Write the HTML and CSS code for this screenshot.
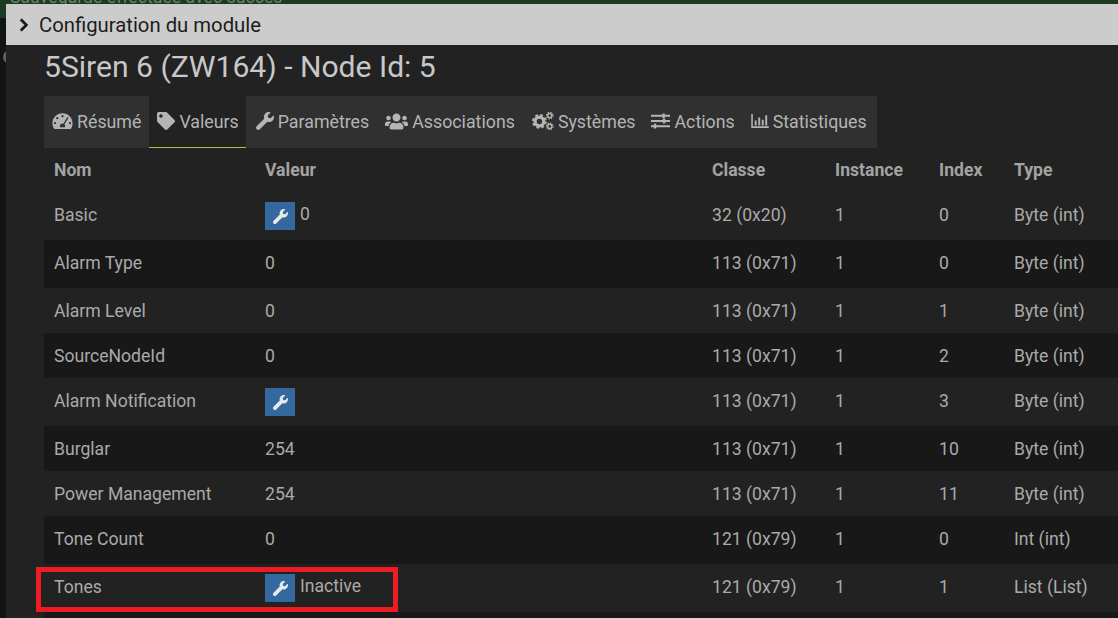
FILE: index.html
```html
<!DOCTYPE html>
<html lang="fr">
<head>
<meta charset="utf-8">
<title>Configuration du module</title>
<link rel="stylesheet" href="styles.css">
</head>
<body>
<div class="alert"><span class="alert-text">Sauvegarde effectuée avec succès</span></div>
<div class="backdrop-dot"></div>
<section class="modal">
  <header class="modal-head">
    <svg class="chev" viewBox="0 0 320 512"><path d="M285.476 272.971L91.132 467.314c-9.373 9.373-24.569 9.373-33.941 0l-22.667-22.667c-9.357-9.357-9.375-24.522-.04-33.901L188.505 256 34.484 101.255c-9.335-9.379-9.317-24.544.04-33.901l22.667-22.667c9.373-9.373 24.569-9.373 33.941 0L285.475 239.03c9.373 9.372 9.373 24.568.001 33.941z"/></svg>
    <span>Configuration du module</span>
  </header>
  <div class="modal-body">
    <h1 class="title">5Siren 6 (ZW164) - Node Id: 5</h1>
    <nav class="tabs">
      <a class="tab">
        <svg class="ico" viewBox="0 0 24 20"><path fill-rule="evenodd" d="M12 1C5.400 1 .5 6 .5 12.500c0 2.200.6 4.300 1.600 6 .2.300.5.500.9.500h18c.4 0 .7-.2.900-.5 1-1.700 1.600-3.800 1.600-6C23.500 6 18.600 1 12 1zM12 3.200a1.300 1.300 0 1 1 0 2.600 1.300 1.300 0 0 1 0-2.600zM6 5.500a1.300 1.300 0 1 1 0 2.600 1.300 1.300 0 0 1 0-2.600zM3.500 11a1.300 1.300 0 1 1 0 2.600 1.300 1.300 0 0 1 0-2.600zM20.500 11a1.300 1.300 0 1 1 0 2.600 1.300 1.300 0 0 1 0-2.600zM17.600 5.300l1.300.9-4.700 7.600c.5.500.8 1.100.8 1.900 0 .6-.2 1.100-.4 1.500H9.400c-.3-.4-.4-.9-.4-1.500 0-1.500 1.300-2.800 3-2.800l1 .1z"/></svg>
        <span>Résumé</span>
      </a>
      <a class="tab tab-active">
        <svg class="ico ico-tag" viewBox="0 0 512 512"><path d="M0 252.118V48C0 21.490 21.490 0 48 0h204.118a48 48 0 0 1 33.941 14.059l211.882 211.882c18.745 18.745 18.745 49.137 0 67.882L293.823 497.941c-18.745 18.745-49.137 18.745-67.882 0L14.059 286.059A48 48 0 0 1 0 252.118zM112 64c-26.510 0-48 21.490-48 48s21.490 48 48 48 48-21.490 48-48-21.490-48-48-48z"/></svg>
        <span>Valeurs</span>
      </a>
      <a class="tab tab-wrench">
        <svg class="ico ico-wrench" viewBox="0 0 512 512"><path d="M507.730 109.100c-2.240-9.030-13.540-12.090-20.120-5.510l-74.360 74.360-67.880-11.310-11.310-67.880 74.360-74.360c6.620-6.620 3.430-17.900-5.660-20.160-47.380-11.740-99.550.91-136.580 37.930-39.640 39.640-50.550 97.100-34.050 147.200L18.740 402.760c-24.990 24.990-24.990 65.510 0 90.500 24.990 24.990 65.510 24.990 90.500 0l213.210-213.210c50.120 16.710 107.470 5.680 147.370-34.220 37.070-37.070 49.700-89.320 37.910-136.730z"/></svg>
        <span>Paramètres</span>
      </a>
      <a class="tab">
        <svg class="ico ico-users" viewBox="0 0 640 512"><path d="M96 224c35.300 0 64-28.700 64-64s-28.700-64-64-64-64 28.700-64 64 28.700 64 64 64zm448 0c35.300 0 64-28.700 64-64s-28.700-64-64-64-64 28.700-64 64 28.700 64 64 64zm32 32h-64c-17.600 0-33.500 7.100-45.100 18.600 40.300 22.100 68.900 62 75.100 109.400h66c17.700 0 32-14.300 32-32v-32c0-35.300-28.700-64-64-64zm-256 0c61.900 0 112-50.100 112-112S381.900 32 320 32 208 82.100 208 144s50.100 112 112 112zm76.800 32h-8.300c-20.800 10-43.900 16-68.500 16s-47.600-6-68.500-16h-8.300C179.600 288 128 339.600 128 403.200V432c0 26.500 21.500 48 48 48h288c26.500 0 48-21.500 48-48v-28.800c0-63.600-51.600-115.200-115.200-115.200zm-223.700-13.400C161.500 263.100 145.600 256 128 256H64c-35.300 0-64 28.700-64 64v32c0 17.700 14.300 32 32 32h65.900c6.300-47.400 34.900-87.300 75.200-109.400z"/></svg>
        <span>Associations</span>
      </a>
      <a class="tab tab-cogs">
        <svg class="ico ico-cogs" viewBox="0 0 24 20">
          <circle cx="8" cy="10.500" r="4.800" fill="none" stroke="currentColor" stroke-width="3.600"/>
          <circle cx="8" cy="10.500" r="7" fill="none" stroke="currentColor" stroke-width="2.400" stroke-dasharray="3 2.500"/>
          <circle cx="19.500" cy="4" r="2.300" fill="none" stroke="currentColor" stroke-width="1.600"/>
          <circle cx="19.500" cy="4" r="3.700" fill="none" stroke="currentColor" stroke-width="1.300" stroke-dasharray="1.500 1.400"/>
          <circle cx="19.500" cy="16" r="2.300" fill="none" stroke="currentColor" stroke-width="1.600"/>
          <circle cx="19.500" cy="16" r="3.700" fill="none" stroke="currentColor" stroke-width="1.300" stroke-dasharray="1.500 1.400"/>
        </svg>
        <span>Systèmes</span>
      </a>
      <a class="tab">
        <svg class="ico ico-sliders" viewBox="0 0 20 16"><path d="M0 1.500h20v2H0zM0 7h20v2H0zM0 12.500h20v2H0zM12 0h2.500v5H12zM12.500 5.500H15v5h-2.500zM3 11h2.500v5H3z"/></svg>
        <span>Actions</span>
      </a>
      <a class="tab">
        <svg class="ico ico-chart" viewBox="0 0 20 16"><path d="M0 0h1.800v14H20v2H0zM4 7.500h2.200V13H4zM8 4h2.200v9H8zM12 6.500h2.200V13H12zM16 1.500h2.200V13H16z"/></svg>
        <span>Statistiques</span>
      </a>
    </nav>
    <table class="values">
      <colgroup>
        <col class="c-nom"><col class="c-val"><col class="c-cla"><col class="c-ins"><col class="c-idx"><col class="c-typ">
      </colgroup>
      <thead>
        <tr><th>Nom</th><th>Valeur</th><th>Classe</th><th>Instance</th><th>Index</th><th>Type</th></tr>
      </thead>
      <tbody>
        <tr class="tall"><td>Basic</td><td class="with-btn"><button class="btn"><svg viewBox="0 0 512 512"><path d="M507.730 109.100c-2.240-9.030-13.540-12.090-20.120-5.510l-74.360 74.360-67.880-11.310-11.310-67.880 74.360-74.360c6.620-6.620 3.430-17.900-5.660-20.160-47.380-11.740-99.550.91-136.580 37.930-39.640 39.640-50.550 97.100-34.050 147.200L18.740 402.760c-24.990 24.990-24.990 65.510 0 90.500 24.990 24.990 65.510 24.990 90.500 0l213.210-213.210c50.120 16.710 107.470 5.680 147.370-34.220 37.070-37.070 49.700-89.320 37.910-136.730z"/></svg></button><span>0</span></td><td>32 (0x20)</td><td>1</td><td>0</td><td>Byte (int)</td></tr>
        <tr class="tall"><td>Alarm Type</td><td>0</td><td>113 (0x71)</td><td>1</td><td>0</td><td>Byte (int)</td></tr>
        <tr><td>Alarm Level</td><td>0</td><td>113 (0x71)</td><td>1</td><td>1</td><td>Byte (int)</td></tr>
        <tr><td>SourceNodeId</td><td>0</td><td>113 (0x71)</td><td>1</td><td>2</td><td>Byte (int)</td></tr>
        <tr class="tall"><td>Alarm Notification</td><td class="with-btn"><button class="btn"><svg viewBox="0 0 512 512"><path d="M507.730 109.100c-2.240-9.030-13.540-12.090-20.120-5.510l-74.360 74.360-67.880-11.310-11.310-67.880 74.360-74.360c6.620-6.620 3.430-17.900-5.660-20.160-47.380-11.740-99.550.91-136.580 37.930-39.640 39.640-50.550 97.100-34.050 147.200L18.740 402.760c-24.990 24.990-24.990 65.510 0 90.500 24.990 24.990 65.510 24.990 90.500 0l213.210-213.210c50.120 16.710 107.470 5.680 147.370-34.220 37.070-37.070 49.700-89.320 37.910-136.730z"/></svg></button></td><td>113 (0x71)</td><td>1</td><td>3</td><td>Byte (int)</td></tr>
        <tr><td>Burglar</td><td>254</td><td>113 (0x71)</td><td>1</td><td>10</td><td>Byte (int)</td></tr>
        <tr><td>Power Management</td><td>254</td><td>113 (0x71)</td><td>1</td><td>11</td><td>Byte (int)</td></tr>
        <tr class="tall"><td>Tone Count</td><td>0</td><td>121 (0x79)</td><td>1</td><td>0</td><td>Int (int)</td></tr>
        <tr class="tall"><td>Tones</td><td class="with-btn"><button class="btn"><svg viewBox="0 0 512 512"><path d="M507.730 109.100c-2.240-9.030-13.540-12.090-20.120-5.510l-74.360 74.360-67.880-11.310-11.310-67.880 74.360-74.360c6.620-6.620 3.430-17.900-5.660-20.160-47.380-11.740-99.550.91-136.580 37.930-39.640 39.640-50.550 97.100-34.050 147.200L18.740 402.760c-24.990 24.990-24.990 65.510 0 90.500 24.990 24.990 65.510 24.990 90.500 0l213.210-213.210c50.120 16.710 107.470 5.680 147.370-34.220 37.070-37.070 49.700-89.320 37.910-136.730z"/></svg></button><span>Inactive</span></td><td>121 (0x79)</td><td>1</td><td>1</td><td>List (List)</td></tr>
        <tr class="tall"><td></td><td></td><td></td><td></td><td></td><td></td></tr>
      </tbody>
    </table>
  </div>
</section>
<div class="highlight"></div>
</body>
</html>
```
FILE: styles.css
```css
* { box-sizing: border-box; }
html, body { margin: 0; height: 100%; }
body {
  background: #121414;
  font-family: Roboto, "Liberation Sans", sans-serif;
  overflow: hidden;
  position: relative;
}
.alert {
  height: 18px;
  background: #1d3a22;
  overflow: hidden;
  color: #6d7f6d;
  font-size: 17.7px;
  line-height: 16px;
}
.alert-text {
  display: block;
  margin-top: -11px;
  padding-left: 10px;
}
.backdrop-dot {
  position: absolute;
  left: 3px;
  top: 50px;
  width: 14px;
  height: 14px;
  border-radius: 50%;
  background: #5a6468;
}
.modal {
  position: absolute;
  left: 6px;
  right: 0;
  top: 4px;
  bottom: 0;
  background: #222;
  overflow: hidden;
}
.modal-head {
  height: 41px;
  background: #ccc;
  color: #1c1c1c;
  font-size: 20.3px;
  display: flex;
  align-items: center;
  padding-left: 13px;
  gap: 10px;
}
.chev { width: 10px; height: 14px; fill: #1a1a1a; stroke: #1a1a1a; stroke-width: 30px; }
.modal-body { padding: 0 0 0 38px; }
.title {
  margin: 0;
  padding-top: 4px;
  height: 51px;
  font-size: 30.1px;
  line-height: 35px;
  font-weight: 400;
  color: #c8c8c8;
}
.tabs {
  display: flex;
  width: 833px;
  height: 52px;
  background: #303030;
}
.tab {
  display: flex;
  align-items: center;
  gap: 4px;
  padding: 0 8px 2px;
  color: #b4b4b4;
  font-size: 17.8px;
  white-space: nowrap;
}
.tab-active {
  background: #222;
  border-bottom: 1px solid #9fc83a;
  padding: 0 7px 1px 8px;
}
.tab-wrench { padding-left: 10px; }
.tab-cogs { padding-left: 9px; }
.ico { width: 21px; height: 18px; fill: currentColor; flex: none; }
.ico-tag { width: 18px; height: 18px; }
.ico-wrench { width: 18px; height: 18px; }
.ico-users { width: 23px; height: 19px; }
.ico-cogs { width: 22px; height: 18px; }
.ico-sliders { width: 19px; height: 16px; }
.ico-chart { width: 18px; height: 14px; }
.values {
  border-collapse: collapse;
  table-layout: fixed;
  width: 1074px;
  color: #aaa;
  font-size: 17.6px;
}
.c-nom { width: 211px; }
.c-val { width: 447px; }
.c-cla { width: 123px; }
.c-ins { width: 104px; }
.c-idx { width: 75px; }
.c-typ { width: 114px; }
.values th {
  height: 44px;
  padding: 0 10px;
  text-align: left;
  font-weight: 700;
  color: #a3a3a3;
}
.values td { height: 45px; padding: 0 10px; vertical-align: middle; }
.values tr.tall td { height: 48px; padding-bottom: 2px; }
.values tbody tr:nth-child(even) { background: #181818; }
.with-btn { white-space: nowrap; }
.values tr.tall td.with-btn { padding-bottom: 0; }
.with-btn span { position: relative; top: -1px; }
.btn {
  display: inline-flex;
  align-items: center;
  justify-content: center;
  vertical-align: middle;
  width: 30px;
  height: 28px;
  margin-right: 5px;
  padding: 0;
  border: 0;
  background: #33699e;
}
.btn svg { width: 15px; height: 15px; fill: #e8e8e8; }
.highlight {
  position: absolute;
  left: 36px;
  top: 567px;
  width: 362px;
  height: 45px;
  border: 5px solid #ed1c24;
}
```
